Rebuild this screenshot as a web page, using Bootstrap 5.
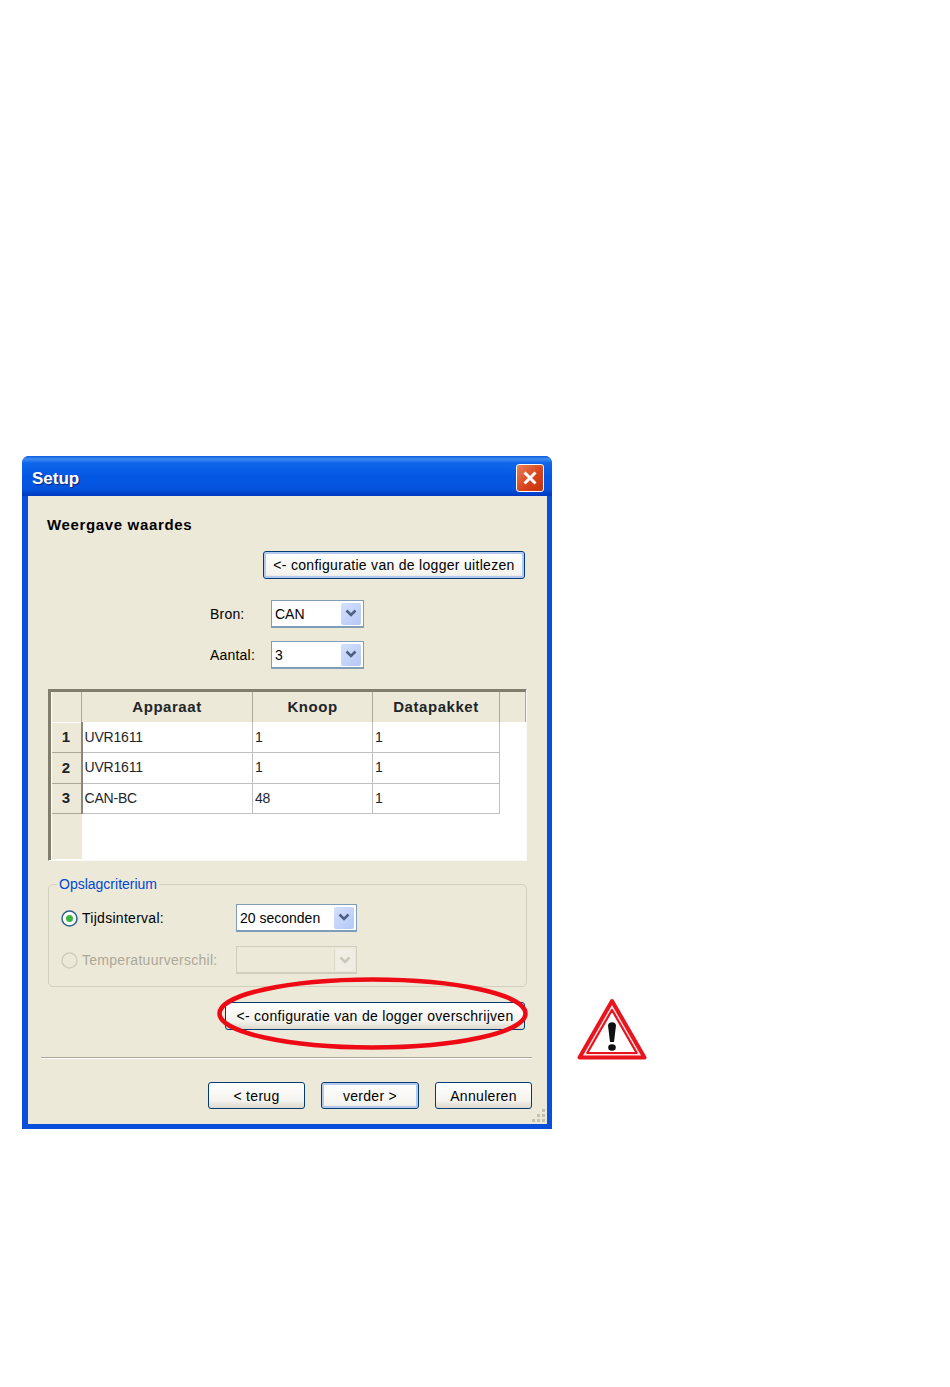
<!DOCTYPE html>
<html lang="nl">
<head>
  <meta charset="UTF-8">
  <meta name="viewport" content="width=device-width, initial-scale=1.0">
  <title>Setup</title>
  <link rel="stylesheet" href="https://cdn.jsdelivr.net/npm/bootstrap@5.3.0/dist/css/bootstrap.min.css">
  <style>
    body { background: #fff; font-family: "Liberation Sans", Arial, sans-serif; font-size: 14px; color: #000; }
    .sheet { padding: 456px 0 0 22px; }
    .xp-window { width: 530px; height: 673px; background: #0a4fdc; border-radius: 7px 7px 0 0; padding: 0 5px 5px 6px; }
    .xp-title { height: 40px; margin: 0 -5px 0 -6px; padding: 4px 8px 0 10px; border-radius: 7px 7px 0 0;
      background: linear-gradient(#0a5bdc 0, #3f8cf3 3px, #0f66ea 7px, #0458e4 20px, #0453dd 33px, #0038c0 40px); }
    .xp-title span { color: #fff; font-weight: 700; font-size: 17px; padding-top: 1px; text-shadow: 1px 1px 1px #0a2a80; }
    .xp-close { width: 28px; height: 28px; padding: 0; border: 1px solid #fff; border-radius: 3px; background: linear-gradient(135deg, #e8835c, #d9441c 55%, #c23208); }
    .xp-body { position: relative; height: 628px; background: #ece9d8; padding: 19px 20px 0; }
    .xp-heading { font-size: 15px; font-weight: 700; height: 20px; line-height: 20px; letter-spacing: .65px; margin-left: -1px; }
    .xp-btn { height: 28px; padding: 0; font-size: 14px; line-height: 24px; letter-spacing: .3px; color: #000; border: 1px solid #003c74; border-radius: 3px;
      background: linear-gradient(#fff, #f4f3ee 70%, #dcd8cc); }
    .xp-btn:hover { color: #000; border-color: #003c74; }
    .btn-focus { box-shadow: inset 0 0 0 2px #b4c9f0; background: linear-gradient(#fff, #f4f3ee 85%, #e4e1d8); }
    .top-action { width: 262px; margin: 16px 2px 0 0; }
    .combo-row { height: 28px; padding-left: 162px; }
    .row-bron { margin-top: 21px; }
    .row-aantal { margin-top: 13px; }
    .combo-label { width: 61px; letter-spacing: .2px; }
    .xp-combo { height: 28px; background: #fff; border: 1px solid #7f9db9; border-bottom-width: 2px; padding: 1px 1px 1px 3px; }
    .xp-combo > span:first-child { padding-top: 1px; }
    .combo-small { width: 93px; }
    .combo-wide { width: 121px; }
    .combo-arrow { width: 20px; height: 22px; padding-top: 0; background: linear-gradient(135deg, #d4e0fc, #b4c8f6); border-radius: 2px; margin-right: 1px; }
    .combo-off { background: #ece9d8; border-color: #cfcdc0; }
    .combo-off .combo-arrow { background: #f0eee4; border-left: 1px solid #dbd8ca; }
    .grid-box { height: 172px; margin-top: 20px; background: #fff; border: 1px solid; border-color: #817e70 #fbfaf6 #fbfaf6 #817e70; box-shadow: inset 2px 2px 0 #817e70; padding: 2px 2px 0 2px; }
    .xp-grid { table-layout: fixed; width: 474px; --bs-table-bg: transparent; }
    .cw-corner { width: 30px; }
    .cw-device { width: 171px; }
    .cw-node { width: 120px; }
    .cw-packet { width: 127px; }
    .cw-rest { width: 26px; }
    .xp-grid.table > * > tr > * { padding: 0 2px; border: 0; font-size: 14px; vertical-align: middle; }
    .xp-grid.table > thead > tr > th { height: 30px; background: #ece9d8; text-align: center; font-size: 15px; letter-spacing: .55px; border-left: 1px solid #fff; border-right: 1px solid #aca899; }
    .xp-grid.table > tbody > tr > th { background: #ece9d8; text-align: center; font-size: 15px; border-top: 1px solid #fff; border-bottom: 1px solid #aca899; border-right: 2px solid #8a877a; }
    .xp-grid.table > tbody > tr > td { height: 30.5px; border-right: 1px solid #c0c0c0; border-bottom: 1px solid #c0c0c0; font-weight: 400; letter-spacing: -.2px; }
    .xp-grid.table > tbody > tr > td.grid-blank { border: 0; }
    .xp-grid.table > tbody > tr.grid-fill > * { height: 45px; border: 0; }
    .xp-group { height: 112px; margin-top: 14px; padding: 0 12px; border: 1px solid #d0d0bf; border-radius: 5px; }
    .xp-group legend { float: none; width: auto; margin: 0 0 0 -4px; padding: 0 2px; font-size: 14px; line-height: 18px; color: #0046d5; }
    .group-line { height: 28px; }
    .line-one { margin-top: 11px; }
    .line-two { margin-top: 14px; color: #aca899; }
    .group-label { width: 158px; padding-left: 4px; letter-spacing: .28px; }
    .group-label-radio { width: 17px; height: 17px; flex: none; }
    .red-action { position: relative; width: 300px; margin: 15px 2px 0 auto; }
    .red-action .xp-btn { width: 300px; display: block; }
    .red-ring { position: absolute; left: -8px; top: -25px; width: 311px; height: 73px; pointer-events: none; }
    .xp-rule { height: 2px; margin: 27px -5px 0 -7px; background: #aca899; border-bottom: 1px solid #fff; }
    .nav-row { gap: 16px; margin: 23px -5px 0 0; }
    .nav-row .xp-btn { width: 97px; height: 27px; }
    .nav-row .xp-btn.btn-focus { width: 98px; }
    .xp-grip { position: absolute; right: 1px; bottom: 2px; width: 14px; height: 14px; }
    .warn-mark { width: 72px; height: 65px; margin: 541px 0 0 24px; }
  </style>
</head>
<body>
  <div class="sheet d-flex align-items-start">
    <div class="xp-window">
      <div class="xp-title d-flex align-items-center justify-content-between">
        <span>Setup</span>
        <button type="button" class="xp-close d-flex align-items-center justify-content-center" aria-label="Sluiten">
          <svg width="16" height="16" viewBox="0 0 16 16"><path d="M2.5 2.5 13.5 13.5M13.5 2.5 2.5 13.5" stroke="#fff" stroke-width="3" fill="none"/></svg>
        </button>
      </div>
      <div class="xp-body">
        <div class="xp-heading">Weergave waardes</div>
        <div class="d-flex justify-content-end">
          <button type="button" class="btn xp-btn btn-focus top-action">&lt;- configuratie van de logger uitlezen</button>
        </div>

        <div class="combo-row row-bron d-flex align-items-center">
          <div class="combo-label">Bron:</div>
          <div class="xp-combo combo-small d-flex align-items-center justify-content-between">
            <span>CAN</span>
            <span class="combo-arrow d-flex align-items-center justify-content-center"><svg width="12" height="9" viewBox="0 0 12 9"><path d="M1.5 1.5 6 6l4.500-4.500" stroke="#4d6185" stroke-width="2.600" fill="none"/></svg></span>
          </div>
        </div>
        <div class="combo-row row-aantal d-flex align-items-center">
          <div class="combo-label">Aantal:</div>
          <div class="xp-combo combo-small d-flex align-items-center justify-content-between">
            <span>3</span>
            <span class="combo-arrow d-flex align-items-center justify-content-center"><svg width="12" height="9" viewBox="0 0 12 9"><path d="M1.5 1.5 6 6l4.500-4.500" stroke="#4d6185" stroke-width="2.600" fill="none"/></svg></span>
          </div>
        </div>

        <div class="grid-box">
          <table class="table xp-grid mb-0">
            <colgroup><col class="cw-corner"><col class="cw-device"><col class="cw-node"><col class="cw-packet"><col class="cw-rest"></colgroup>
            <thead>
              <tr><th></th><th>Apparaat</th><th>Knoop</th><th>Datapakket</th><th></th></tr>
            </thead>
            <tbody>
              <tr><th>1</th><td>UVR1611</td><td>1</td><td>1</td><td class="grid-blank"></td></tr>
              <tr><th>2</th><td>UVR1611</td><td>1</td><td>1</td><td class="grid-blank"></td></tr>
              <tr><th>3</th><td>CAN-BC</td><td>48</td><td>1</td><td class="grid-blank"></td></tr>
              <tr class="grid-fill"><th></th><td></td><td></td><td></td><td></td></tr>
            </tbody>
          </table>
        </div>

        <fieldset class="xp-group">
          <legend>Opslagcriterium</legend>
          <div class="group-line line-one d-flex align-items-center">
            <svg class="group-label-radio" viewBox="0 0 17 17"><circle cx="8.500" cy="8.500" r="7.500" fill="#fff" stroke="#2f5f8a" stroke-width="1.500"/><circle cx="8.500" cy="8.500" r="3.500" fill="#3fb53f"/></svg>
            <div class="group-label">Tijdsinterval:</div>
            <div class="xp-combo combo-wide d-flex align-items-center justify-content-between">
              <span>20 seconden</span>
              <span class="combo-arrow d-flex align-items-center justify-content-center"><svg width="12" height="9" viewBox="0 0 12 9"><path d="M1.5 1.5 6 6l4.500-4.500" stroke="#4d6185" stroke-width="2.600" fill="none"/></svg></span>
            </div>
          </div>
          <div class="group-line line-two d-flex align-items-center">
            <svg class="group-label-radio" viewBox="0 0 17 17"><circle cx="8.500" cy="8.500" r="7.500" fill="#ece9d8" stroke="#cfcdc0" stroke-width="1.500"/></svg>
            <div class="group-label">Temperatuurverschil:</div>
            <div class="xp-combo combo-off combo-wide d-flex align-items-center justify-content-end">
              <span class="combo-arrow d-flex align-items-center justify-content-center"><svg width="12" height="9" viewBox="0 0 12 9"><path d="M1.5 1.5 6 6l4.500-4.500" stroke="#c9c7ba" stroke-width="2.600" fill="none"/></svg></span>
            </div>
          </div>
        </fieldset>

        <div class="red-action">
          <button type="button" class="btn xp-btn">&lt;- configuratie van de logger overschrijven</button>
          <svg class="red-ring" viewBox="0 0 311 73"><ellipse cx="155.500" cy="36.500" rx="153" ry="34" fill="none" stroke="#ee0a14" stroke-width="4.500"/></svg>
        </div>

        <div class="xp-rule"></div>

        <div class="nav-row d-flex justify-content-end">
          <button type="button" class="btn xp-btn">&lt; terug</button>
          <button type="button" class="btn xp-btn btn-focus">verder &gt;</button>
          <button type="button" class="btn xp-btn">Annuleren</button>
        </div>

        <svg class="xp-grip" viewBox="0 0 14 14"><path d="M10 1h3v3h-3zM5 6h3v3H5zM10 6h3v3h-3zM0 11h3v3H0zM5 11h3v3H5zM10 11h3v3h-3z" fill="#c4c1b0"/></svg>
      </div>
    </div>

    <svg class="warn-mark" viewBox="0 0 72 65">
      <path d="M36 4 68.500 60.500H3.500Z" fill="#fbe4e4" stroke="#e8141e" stroke-width="4" stroke-linejoin="round"/>
      <path d="M36 13 60.700 56H11.300Z" fill="#fff" stroke="#e8141e" stroke-width="2.200" stroke-linejoin="round"/>
      <path d="M32 28.500c0-4.500 8-4.500 8 0L38 45h-4Z" fill="#111"/>
      <ellipse cx="36" cy="50.500" rx="3.800" ry="3.200" fill="#111"/>
    </svg>
  </div>
  <script src="https://cdn.jsdelivr.net/npm/bootstrap@5.3.0/dist/js/bootstrap.bundle.min.js"></script>
</body>
</html>
